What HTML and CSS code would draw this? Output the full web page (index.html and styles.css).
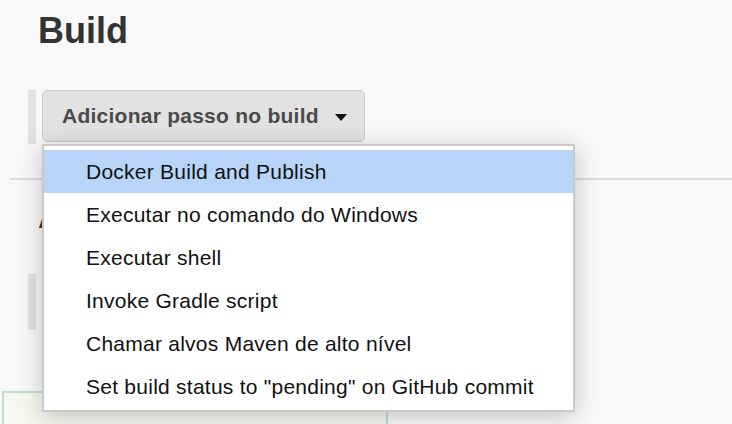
FILE: index.html
```html
<!DOCTYPE html>
<html lang="pt">
<head>
<meta charset="utf-8">
<title>Build</title>
<link rel="stylesheet" href="styles.css">
</head>
<body>
<div class="page">
  <h2 class="section-title">Build</h2>
  <div class="step-row">
    <div class="step-bar"></div>
    <div class="dropdown">
      <button class="add-btn" type="button">
        <span>Adicionar passo no build</span>
        <span class="caret"></span>
      </button>
      <ul class="menu">
        <li class="menu-item active">Docker Build and Publish</li>
        <li class="menu-item">Executar no comando do Windows</li>
        <li class="menu-item">Executar shell</li>
        <li class="menu-item">Invoke Gradle script</li>
        <li class="menu-item">Chamar alvos Maven de alto nível</li>
        <li class="menu-item">Set build status to "pending" on GitHub commit</li>
      </ul>
    </div>
  </div>
  <div class="divider"></div>
  <h2 class="section-title second">Ações de pós-build</h2>
  <div class="step-row second-row">
    <div class="step-bar tall"></div>
  </div>
  <div class="footer-box"></div>
</div>
</body>
</html>
```
FILE: styles.css
```css
html, body {
  margin: 0;
  padding: 0;
  background: #f8f8f8;
  font-family: "Liberation Sans", Arial, Helvetica, sans-serif;
  overflow: hidden;
}

.page {
  width: 732px;
  height: 424px;
  position: relative;
  overflow: hidden;
}

.section-title {
  margin: 11px 0 0 0;
  padding-left: 38px;
  font-size: 36px;
  line-height: 40px;
  font-weight: bold;
  color: #333333;
}

.section-title.second {
  margin-top: 16px;
  white-space: nowrap;
}

.step-row {
  display: flex;
  align-items: flex-start;
  margin-top: 39px;
  padding-left: 28px;
  gap: 6px;
}

.step-row.second-row {
  margin-top: 38px;
}

.step-bar {
  width: 8px;
  height: 54px;
  background: #e1e1e1;
}

.step-bar.tall {
  height: 56px;
}

.dropdown {
  position: relative;
}

.add-btn {
  box-sizing: border-box;
  width: 323px;
  height: 52px;
  display: flex;
  align-items: center;
  justify-content: space-between;
  padding: 0 17px 0 19px;
  margin: 0;
  background: #e2e2e2;
  border: 1px solid #cdcdcd;
  border-radius: 5px;
  font-family: "Liberation Sans", Arial, Helvetica, sans-serif;
  font-size: 21px;
  font-weight: bold;
  letter-spacing: 0.25px;
  color: #4a4a4a;
}

.caret {
  width: 0;
  height: 0;
  border-left: 6px solid transparent;
  border-right: 6px solid transparent;
  border-top: 7px solid #111111;
  margin-top: 2px;
}

.menu {
  position: absolute;
  left: 0;
  top: 54px;
  z-index: 10;
  box-sizing: border-box;
  width: 533px;
  margin: 0;
  padding: 4px 0 2px 0;
  list-style: none;
  background: #ffffff;
  border: 2px solid #c9c9c9;
  box-shadow: 0 4px 22px rgba(0, 0, 0, 0.22);
}

.menu-item {
  height: 43px;
  line-height: 44px;
  padding-left: 42px;
  font-size: 21px;
  letter-spacing: 0.25px;
  color: #111111;
  white-space: nowrap;
}

.menu-item.active {
  background: #b8d5f9;
}

.divider {
  margin: 34px 0 0 10px;
  height: 2px;
  background: #dddddd;
}

.footer-box {
  box-sizing: border-box;
  margin: 61px 0 0 2px;
  width: 386px;
  height: 33px;
  border: 2px solid #c3ddd0;
  border-bottom: none;
  background: #f4f8ef;
}
```
